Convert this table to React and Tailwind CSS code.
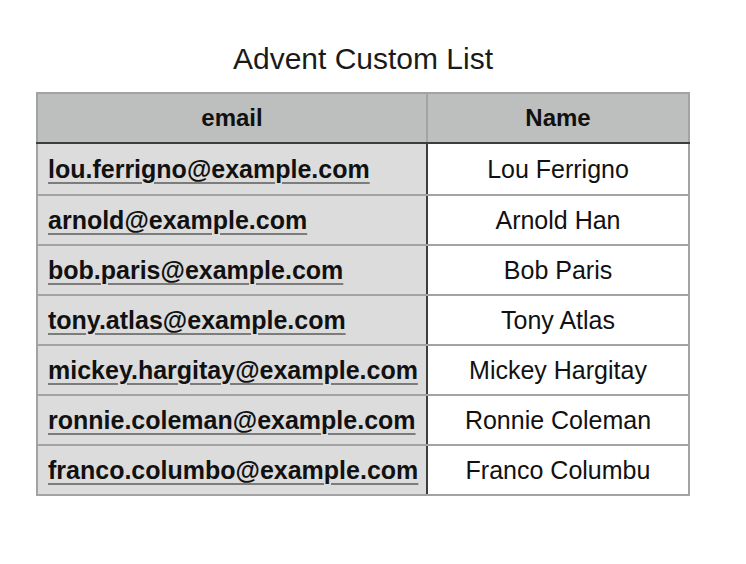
const people = [
  { email: "lou.ferrigno@example.com", name: "Lou Ferrigno" },
  { email: "arnold@example.com", name: "Arnold Han" },
  { email: "bob.paris@example.com", name: "Bob Paris" },
  { email: "tony.atlas@example.com", name: "Tony Atlas" },
  { email: "mickey.hargitay@example.com", name: "Mickey Hargitay" },
  { email: "ronnie.coleman@example.com", name: "Ronnie Coleman" },
  { email: "franco.columbo@example.com", name: "Franco Columbu" },
];

export default function App() {
  return (
    <div
      className="min-h-[564px] w-[746px] bg-white text-[#111]"
      style={{ fontFamily: '"Liberation Sans", Arial, sans-serif' }}
    >
      <div className="ml-[36px] w-[654px]">
        <h1 className="pt-[44px] mb-[18px] text-center text-[30px] leading-[30px] font-normal text-[#1a1a1a]">
          Advent Custom List
        </h1>
        <table className="w-[652px] table-fixed border-collapse border-2 border-[#a3a3a3] text-[25px]">
          <colgroup>
            <col className="w-[390px]" />
            <col className="w-[262px]" />
          </colgroup>
          <thead>
            <tr className="h-[50px] bg-[#bdbfbe]">
              <th className="border-2 border-[#a3a3a3] border-b-[#3d3d3d] text-center text-[24px] font-bold">
                email
              </th>
              <th className="border-2 border-[#a3a3a3] border-b-[#3d3d3d] text-center text-[24px] font-bold">
                Name
              </th>
            </tr>
          </thead>
          <tbody>
            {people.map((p, i) => (
              <tr key={p.email} className={i === 0 ? "h-[52px]" : "h-[50px]"}>
                <td className="border-2 border-[#a3a3a3] border-r-[#3d3d3d] bg-[#dcdcdc] pl-[10px] pt-[1px] font-bold">
                  <a
                    href="#"
                    className="underline decoration-2 decoration-[#7c7c7c] underline-offset-[4px]"
                  >
                    {p.email}
                  </a>
                </td>
                <td className="border-2 border-[#a3a3a3] bg-white pt-[1px] text-center">
                  {p.name}
                </td>
              </tr>
            ))}
          </tbody>
        </table>
      </div>
    </div>
  );
}
